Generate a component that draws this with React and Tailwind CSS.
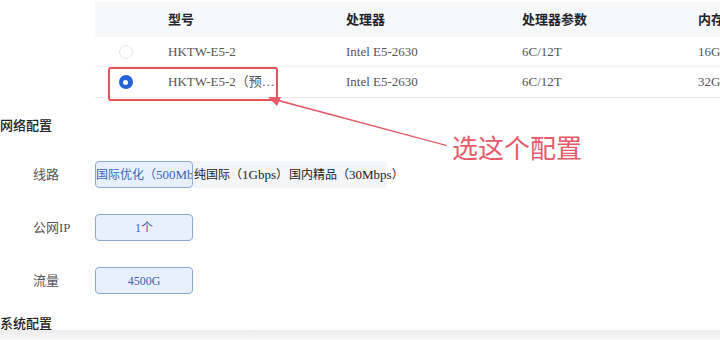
import React from 'react';

const font = { fontFamily: '"Liberation Serif", "Noto Sans CJK SC", serif' };

const rows = [
  { model: 'HKTW-E5-2（预…', short: 'HKTW-E5-2', cpu: 'Intel E5-2630', spec: '6C/12T', mem: '16GB', checked: false },
  { model: 'HKTW-E5-2（预…', cpu: 'Intel E5-2630', spec: '6C/12T', mem: '32GB', checked: true },
];

const Radio = ({ checked }) =>
  checked ? (
    <span className="w-[14px] h-[14px] rounded-full bg-[#2462d9] flex items-center justify-center">
      <span className="w-[5px] h-[5px] rounded-full bg-white" />
    </span>
  ) : (
    <span className="w-[14px] h-[14px] rounded-full border border-[#e3e5e9] bg-white" />
  );

const OptionBox = ({ children }) => (
  <div className="w-[98px] h-[27px] rounded-[4px] border border-[#8ea9d8] bg-[#e9f0fd] text-[#3a5fb0] text-[12px] flex items-center justify-center">
    {children}
  </div>
);

const FormRow = ({ label, children }) => (
  <div className="flex items-center h-[27px]">
    <div className="w-[95px] pl-[33px] text-[13px] text-[#555]">{label}</div>
    {children}
  </div>
);

// CJK part a bit smaller than the latin part, like the source page renders it
const Line = ({ cn, en }) => (
  <>
    <span className="text-[12px]">{cn}（</span>
    <span className="text-[13px]">{en}</span>
    <span className="text-[12px]">）</span>
  </>
);

export default function App() {
  return (
    <div className="relative w-[720px] h-[340px] overflow-hidden bg-white" style={font}>
      {/* server table */}
      <div className="pl-[95px] pt-[2px]">
        <div className="w-[700px] border-b border-[#e6e8eb]">
          <div className="flex h-[35px] items-center bg-[#f7f8fa] text-[13px] font-bold text-[#1f2329]">
            <div className="w-[57px]" />
            <div className="w-[178px] pl-[16px]">型号</div>
            <div className="w-[176px] pl-[16px]">处理器</div>
            <div className="w-[176px] pl-[16px]">处理器参数</div>
            <div className="pl-[16px]">内存</div>
          </div>
          {rows.map((r, i) => (
            <div
              key={i}
              className={`flex h-[30px] items-center text-[13px] text-[#555] ${i === 0 ? 'border-b border-[#f0f1f3]' : ''}`}
            >
              <div className="w-[57px] flex justify-center pl-[4px]">
                <Radio checked={r.checked} />
              </div>
              <div className="w-[178px] pl-[16px] whitespace-nowrap">{r.short || r.model}</div>
              <div className="w-[176px] pl-[16px] whitespace-nowrap">{r.cpu}</div>
              <div className="w-[176px] pl-[16px] whitespace-nowrap">{r.spec}</div>
              <div className="pl-[16px] whitespace-nowrap">{r.mem}</div>
            </div>
          ))}
        </div>
      </div>

      {/* network config */}
      <div className="mt-[19px] text-[13px] font-medium text-[#222] leading-[18px]">网络配置</div>
      <div className="mt-[26px] flex flex-col gap-[26px]">
        <FormRow label="线路">
          <div className="flex h-[27px] w-[292px] rounded-[4px] bg-[#f4f5f7] text-[#222] whitespace-nowrap">
            <div className="w-[98px] flex-none overflow-hidden rounded-[4px] border border-[#8ea9d8] bg-[#e9f0fd] text-[#3a64b8] flex items-center">
              <Line cn="国际优化" en="500Mbps" />
            </div>
            <div className="w-[96px] flex-none flex items-center pl-[1px]">
              <Line cn="纯国际" en="1Gbps" />
            </div>
            <div className="flex-none flex items-center">
              <Line cn="国内精品" en="30Mbps" />
            </div>
          </div>
        </FormRow>
        <FormRow label="公网IP">
          <OptionBox>1个</OptionBox>
        </FormRow>
        <FormRow label="流量">
          <OptionBox>4500G</OptionBox>
        </FormRow>
      </div>

      <div className="mt-[21px] text-[13px] font-medium text-[#222] leading-[18px]">系统配置</div>
      <div className="absolute left-0 right-0 bottom-0 h-[10px] bg-gradient-to-b from-[#ececec] to-[#f8f8f8]" />

      {/* annotation overlay */}
      <div className="absolute left-[108px] top-[67px] w-[170px] h-[34px] rounded-[3px] border-2 border-[#e5505d]" />
      <svg className="absolute left-0 top-0" width="720" height="340">
        <polygon points="276,99 447,145 447,146.2 275,100.6" fill="#e8596a" />
        <polygon points="268,97 281,97 277,106" fill="#e8596a" />
      </svg>
      <div
        className="absolute left-[452px] top-[130px] text-[26px] leading-[34px] text-[#e8596a]"
        style={{ fontFamily: '"Noto Sans CJK SC", sans-serif' }}
      >
        选这个配置
      </div>
    </div>
  );
}
